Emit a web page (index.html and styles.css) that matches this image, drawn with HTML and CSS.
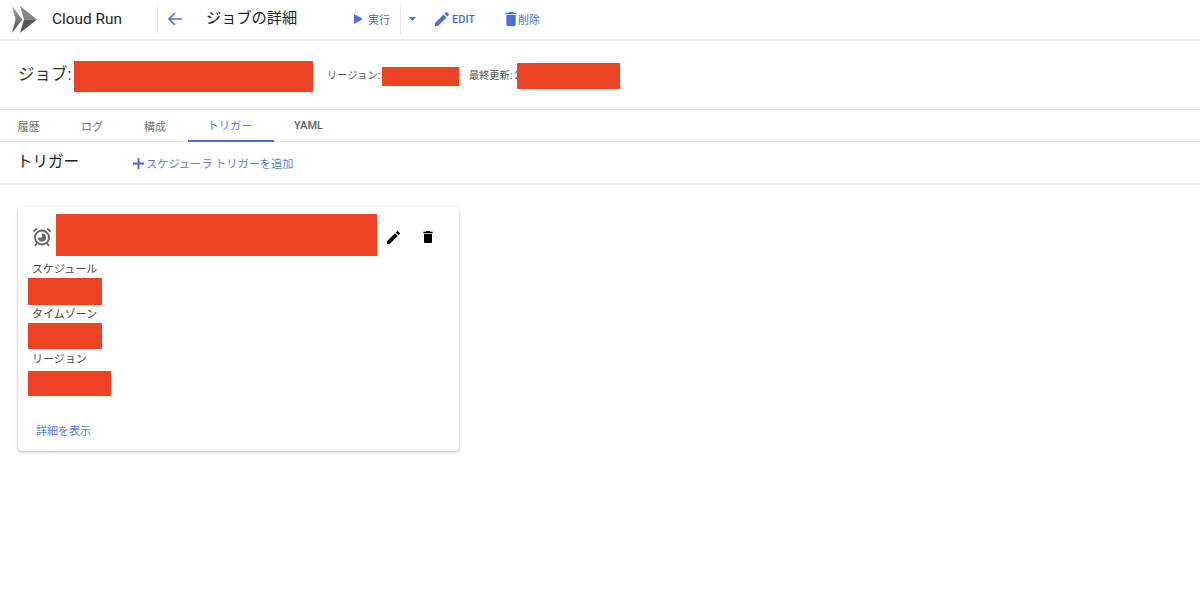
FILE: index.html
```html
<!DOCTYPE html>
<html lang="ja">
<head>
<meta charset="utf-8">
<title>ジョブの詳細</title>
<link rel="stylesheet" href="styles.css">
</head>
<body>
<header class="topbar">
  <svg class="logo" width="26" height="27" viewBox="0 0 26 27"><defs><linearGradient id="lg" x1="0" y1="0" x2="0" y2="1"><stop offset="0" stop-color="#a8a8a8"/><stop offset="1" stop-color="#4a4a4a"/></linearGradient></defs><path d="M0 0l10.500 13.500L0 27l3.500-13.500z" fill="url(#lg)"/><path d="M8 0l17 13.500H12z" fill="#858585"/><path d="M12 13.500h13L8 27z" fill="#555"/></svg>
  <span class="product">Cloud Run</span>
  <span class="vsep first"></span>
  <svg class="back" width="16" height="16" viewBox="0 0 16 16"><path d="M15 8H2M8 2L2 8l6 6" fill="none" stroke="#4a6fdc" stroke-width="1.6"/></svg>
  <span class="page-title">ジョブの詳細</span>
  <button class="action run"><svg width="9" height="10" viewBox="0 0 9 10"><path d="M0 0l9 5-9 5z" fill="#4a6fdc"/></svg><span>実行</span></button>
  <span class="vsep"></span>
  <svg class="caret" width="7" height="4" viewBox="0 0 7 4"><path d="M0 0h7L3.500 4z" fill="#4a6fdc"/></svg>
  <button class="action edit"><svg width="14" height="14" viewBox="3 3 18 18"><path d="M3 17.250V21h3.750L17.810 9.940l-3.750-3.750L3 17.250zM20.710 7.040a1 1 0 0 0 0-1.410l-2.340-2.340a1 1 0 0 0-1.410 0l-1.830 1.830 3.750 3.750 1.830-1.830z" fill="#4a6fdc"/></svg><b>EDIT</b></button>
  <button class="action del"><svg width="12" height="14" viewBox="5 3 14 18"><path d="M6 19c0 1.100.9 2 2 2h8c1.100 0 2-.9 2-2V7H6v12zM19 4h-3.500l-1-1h-5l-1 1H5v2h14V4z" fill="#4a6fdc"/></svg><span>削除</span></button>
</header>

<section class="info">
  <h1 class="job">ジョブ:</h1>
  <span class="red red-job"></span>
  <span class="meta meta-region">リージョン:</span>
  <span class="red red-region"></span>
  <span class="meta meta-updated">最終更新: 2</span>
  <span class="red red-updated"></span>
</section>

<nav class="tabs">
  <a class="tab t1">履歴</a>
  <a class="tab t2">ログ</a>
  <a class="tab t3">構成</a>
  <a class="tab active">トリガー</a>
  <a class="tab yaml">YAML</a>
</nav>

<section class="toolbar">
  <h2 class="tool-title">トリガー</h2>
  <a class="add"><svg width="11" height="11" viewBox="0 0 11 11"><path d="M5.500 0v11M0 5.500h11" stroke="#3f66d6" stroke-width="1.800"/></svg><span>スケジューラ トリガーを追加</span></a>
</section>

<main class="content">
  <article class="card">
    <div class="card-head">
      <svg class="alarm" width="20" height="20" viewBox="0 0 20 20"><circle cx="10" cy="10.500" r="7" fill="none" stroke="#666" stroke-width="1.800"/><path d="M10 6.500a4 4 0 1 1-4 4h4z" fill="#666"/><path d="M1.500 4.500l3.500-3M18.500 4.500l-3.500-3M5 16l-2 3M15 16l2 3" stroke="#666" stroke-width="1.800"/></svg>
      <span class="red red-title"></span>
      <svg class="pencil" width="13" height="13" viewBox="3 3 18 18"><path d="M3 17.250V21h3.750L17.810 9.940l-3.750-3.750L3 17.250zM20.710 7.040a1 1 0 0 0 0-1.410l-2.340-2.340a1 1 0 0 0-1.410 0l-1.830 1.830 3.750 3.750 1.830-1.830z" fill="#000"/></svg>
      <svg class="trash" width="10" height="12" viewBox="5 3 14 18"><path d="M6 19c0 1.100.9 2 2 2h8c1.100 0 2-.9 2-2V7H6v12zM19 4h-3.500l-1-1h-5l-1 1H5v2h14V4z" fill="#000"/></svg>
    </div>
    <div class="label l1">スケジュール</div>
    <span class="red red-a"></span>
    <div class="label l2">タイムゾーン</div>
    <span class="red red-b"></span>
    <div class="label l3">リージョン</div>
    <span class="red red-c"></span>
    <a class="details">詳細を表示</a>
  </article>
</main>
</body>
</html>
```
FILE: styles.css
```css
* { box-sizing: border-box; }
html, body { margin: 0; padding: 0; }
body {
  background: #fff;
  color: #212121;
  font-family: Roboto, "Noto Sans CJK JP", sans-serif;
  height: 603px;
  overflow: hidden;
}
h1, h2 { margin: 0; font-weight: 400; }
button { border: 0; background: none; padding: 0; font: inherit; }

.topbar {
  height: 41px;
  border-bottom: 2px solid #eeeeee;
  display: flex;
  align-items: center;
  padding: 0 0 1px 12px;
}
.logo { flex: none; }
.product { font-size: 15.400px; margin-left: 14px; width: 70px; white-space: nowrap; }
.vsep { width: 1px; height: 29px; background: #e8e8e8; flex: none; }
.vsep.first { margin-left: 35px; margin-right: 9px; }
.back { flex: none; }
.page-title { font-size: 15.200px; line-height: 20px; margin-left: 23px; margin-bottom: 3px; width: 148px; white-space: nowrap; }
.action { display: flex; align-items: center; color: #4a6fdc; font-size: 11px; white-space: nowrap; }
.action.run { gap: 5px; margin-right: 10px; width: 36px; }
.caret { margin-left: 8px; flex: none; }
.action.edit { gap: 3px; margin-left: 18px; }
.action.edit svg { margin-left: 1px; }
.action.edit b { font-weight: 500; font-size: 11px; }
.action.del { gap: 1px; margin-left: 30px; }

.info {
  height: 69px;
  border-bottom: 1px solid #e4e4e4;
  display: flex;
  align-items: flex-start;
  padding-left: 18px;
  color: #555;
}
.job { font-size: 16.500px; line-height: 24px; margin-top: 22px; color: #333; width: 56px; white-space: nowrap; }
.red { display: block; background: #ee4225; flex: none; }
.red-job { width: 239px; height: 31px; margin-top: 20px; }
.meta { font-size: 10.200px; line-height: 14px; margin-top: 28px; white-space: nowrap; }
.meta-region { margin-left: 14px; width: 55px; }
.red-region { width: 77px; height: 19px; margin-top: 26px; }
.meta-updated { margin-left: 10px; width: 48px; }
.red-updated { width: 103px; height: 26px; margin-top: 22px; }

.tabs {
  height: 32px;
  border-bottom: 1px solid #e4e4e4;
  display: flex;
  align-items: stretch;
  font-size: 11px;
  color: #757575;
}
.tab { display: flex; align-items: center; justify-content: center; height: 32px; padding-bottom: 1px; white-space: nowrap; }
.t1 { width: 21px; margin-left: 18px; margin-right: 42px; }
.t2 { width: 22px; margin-right: 41px; }
.t3 { width: 22px; margin-right: 22px; }
.tab.active { width: 86px; color: #5a7fdc; border-bottom: 2px solid #4a6fdc; margin-right: 21px; padding-right: 2px; font-size: 11.250px; }
.tab.yaml { font-weight: 500; color: #5f5f5f; margin-left: -1px; }

.toolbar {
  height: 43px;
  border-bottom: 2px solid #eeeeee;
  display: flex;
  align-items: flex-start;
  padding: 9px 0 0 17px;
}
.tool-title { font-size: 15.500px; line-height: 22px; width: 116px; white-space: nowrap; color: #212121; }
.add { display: flex; align-items: center; height: 22px; gap: 2px; margin-top: 1px; font-size: 11.200px; color: #5a7fdc; white-space: nowrap; }

.content { padding: 22px 0 0 18px; }
.card {
  width: 441px;
  height: 244px;
  background: #fff;
  border-radius: 4px;
  box-shadow: 0 1px 3px rgba(0,0,0,.3);
  padding: 7px 0 0 10px;
}
.card-head { display: flex; align-items: center; height: 42px; }
.alarm { margin-left: 4px; margin-top: 4px; flex: none; }
.red-title { width: 321px; height: 42px; margin-left: 4px; }
.pencil { margin-left: 10px; margin-top: 4px; flex: none; }
.trash { margin-left: 23px; margin-top: 4px; flex: none; }
.label { font-size: 11px; line-height: 15px; color: #444; padding-left: 4px; white-space: nowrap; }
.l1 { margin-top: 6px; margin-bottom: 1px; }
.red-a { width: 74px; height: 27px; }
.l2 { margin-top: 2px; margin-bottom: 1px; }
.red-b { width: 74px; height: 26px; }
.l3 { margin-top: 3px; margin-bottom: 4px; }
.red-c { width: 83px; height: 25px; }
.details { display: block; margin-top: 26px; margin-left: 8px; font-size: 11px; color: #5a7fdc; }
```
